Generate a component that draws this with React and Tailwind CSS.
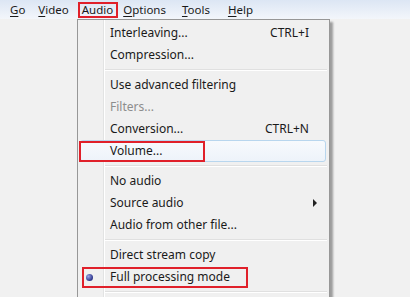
import { Fragment } from "react";

const font = { fontFamily: '"Noto Sans", "Segoe UI", sans-serif' };

const barItems = [
  { key: "G", rest: "o", ml: "ml-0" },
  { key: "V", rest: "ideo", ml: "ml-[13px]" },
  { key: "A", rest: "udio", ml: "ml-[13px]", active: true },
  { key: "O", rest: "ptions", ml: "ml-[10px]" },
  { key: "T", rest: "ools", ml: "ml-[16px]" },
  { key: "H", rest: "elp", ml: "ml-[18px]" },
];

// separators are marked with { sep: true }
const menu = [
  { label: "Interleaving...", shortcut: "CTRL+I" },
  { label: "Compression..." },
  { sep: true },
  { label: "Use advanced filtering" },
  { label: "Filters...", disabled: true },
  { label: "Conversion...", shortcut: "CTRL+N" },
  { label: "Volume...", hover: true, mark: "left-[1px] w-[126px]" },
  { sep: true },
  { label: "No audio" },
  { label: "Source audio", submenu: true },
  { label: "Audio from other file..." },
  { sep: true },
  { label: "Direct stream copy" },
  { label: "Full processing mode", radio: true, mark: "left-[4px] w-[166px]" },
  { sep: true },
];

const App = () => {
  return (
    <div
      className="relative w-[410px] h-[297px] overflow-hidden bg-[#f1f1f1] text-[12px] text-[#1a1a1a]"
      style={font}
    >
      {/* Barra de menú */}
      <div className="flex items-center h-[19px] pl-[10px] bg-gradient-to-b from-[#dce6f4] to-[#f3f6fb]">
        {barItems.map((item) => (
          <span key={item.key} className={`relative leading-[19px] text-[11.5px] ${item.ml}`}>
            <span className="underline underline-offset-2">{item.key}</span>
            {item.rest}
            {item.active && (
              <span className="absolute left-[-4px] right-[-5px] top-[2px] bottom-[1px] border-2 border-[#e0202a]" />
            )}
          </span>
        ))}
      </div>

      {/* Menú desplegable */}
      <div className="absolute left-[77px] top-[19px] w-[253px] h-[300px] border border-[#979797] bg-[#f0f0f0] shadow-[3px_3px_2px_rgba(0,0,0,0.35)]">
        <div className="relative pt-[2px]">
          <div className="absolute left-[25px] top-0 w-px h-[300px] bg-[#e2e3e3]" />
          <div className="absolute left-[26px] top-0 w-px h-[300px] bg-white" />
          {menu.map((item, idx) =>
            item.sep ? (
              <div key={idx} className="h-[8px] flex flex-col justify-center pl-[27px] pr-[2px]">
                <div className="h-px bg-[#e0e0e0]" />
                <div className="h-px bg-white" />
              </div>
            ) : (
              <div key={idx} className="relative h-[22px] flex items-center">
                {item.hover && (
                  <div className="absolute left-[2px] right-[3px] top-0 bottom-0 rounded-[3px] border border-[#b8d6ee] bg-gradient-to-b from-[#f7fafd] to-[#edf3fa]" />
                )}
                <div className="relative w-[27px] h-full flex items-center justify-center">
                  {item.radio && (
                    <span className="block w-[7px] h-[7px] rounded-full ml-[-5px] bg-[radial-gradient(circle_at_35%_35%,#9aa4e8,#2c348a_70%)]" />
                  )}
                </div>
                <span
                  className={`relative pl-[5px] flex-1 ${item.disabled ? "text-[#8d8d8d]" : ""}`}
                >
                  {item.label}
                </span>
                {item.shortcut && (
                  <span className="relative pr-[20px]">{item.shortcut}</span>
                )}
                {item.submenu && (
                  <span className="relative mr-[12px] w-0 h-0 border-y-[4px] border-y-transparent border-l-[4px] border-l-[#222]" />
                )}
                {item.mark && (
                  <span
                    className={`absolute top-[1px] h-[21px] border-2 border-[#e0202a] ${item.mark}`}
                  />
                )}
              </div>
            )
          )}
        </div>
      </div>
    </div>
  );
};

export default App;
